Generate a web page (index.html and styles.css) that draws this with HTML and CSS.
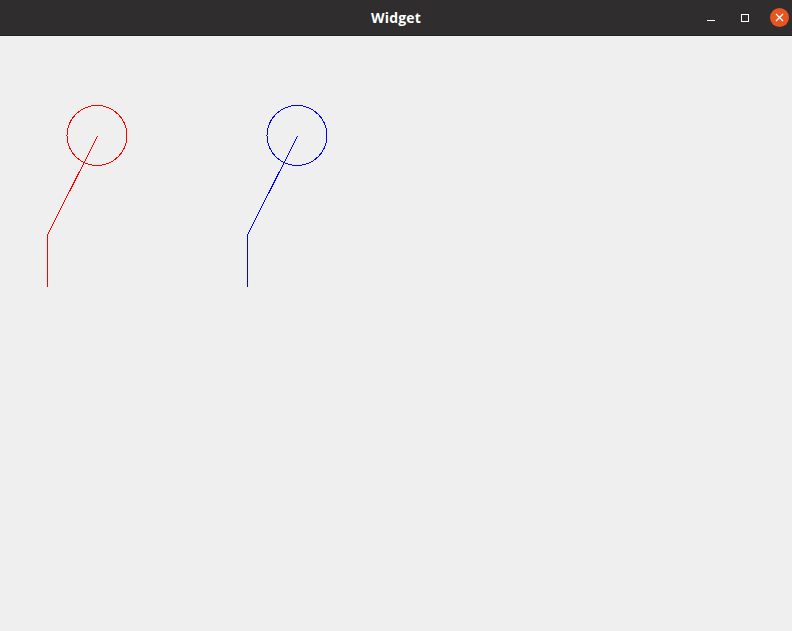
FILE: index.html
```html
<!DOCTYPE html>
<html>
<head>
<meta charset="utf-8">
<link rel="stylesheet" href="styles.css">
</head>
<body>
<div class="window">
  <header class="titlebar">
    <div class="title">Widget</div>
    <div class="controls">
      <span class="btn min"><svg width="10" height="10" viewBox="0 0 10 10"><rect x="1" y="7" width="8" height="1" fill="#ffffff"/></svg></span>
      <span class="btn max"><svg width="10" height="10" viewBox="0 0 10 10"><rect x="1.5" y="1.5" width="7" height="7" fill="none" stroke="#ffffff" stroke-width="1"/></svg></span>
      <span class="btn close"><svg width="19" height="19" viewBox="0 0 19 19"><circle cx="9.5" cy="9.5" r="9.5" fill="#e95420"/><path d="M6 6 L13 13 M13 6 L6 13" stroke="#ffffff" stroke-width="1.3"/></svg></span>
    </div>
  </header>
  <main class="canvas">
    <svg class="drawing" width="792" height="595" viewBox="0 36 792 595" shape-rendering="crispEdges">
      <g fill="none" stroke="#ff0000" stroke-width="1">
        <circle cx="97" cy="135.5" r="30"/>
        <polyline points="97.5,136 47.5,235 47.5,287"/>
      </g>
      <g fill="none" stroke="#0000ff" stroke-width="1">
        <circle cx="297" cy="135.5" r="30"/>
        <polyline points="297.5,136 247.5,235 247.5,287"/>
      </g>
    </svg>
  </main>
</div>
</body>
</html>
```
FILE: styles.css
```css
html, body {
  margin: 0;
  padding: 0;
  width: 792px;
  height: 631px;
  overflow: hidden;
  background: #efefef;
}
.window {
  display: flex;
  flex-direction: column;
  width: 792px;
  height: 631px;
}
.titlebar {
  position: relative;
  height: 35px;
  flex: 0 0 35px;
  background: #2f2d2d;
  border-bottom: 1px solid #232121;
  display: flex;
  align-items: center;
  justify-content: center;
}
.title {
  color: #ffffff;
  font-family: "Open Sans", "DejaVu Sans", sans-serif;
  font-weight: 700;
  font-size: 14px;
  letter-spacing: 0.2px;
}
.controls {
  position: absolute;
  right: 3px;
  top: 0;
  height: 35px;
  display: flex;
  align-items: center;
  gap: 16px;
}
.btn {
  display: flex;
  align-items: center;
  justify-content: center;
  width: 18px;
}
.btn.close { width: 19px; }
.canvas {
  flex: 1;
  background: #efefef;
}
.drawing {
  display: block;
}
```
